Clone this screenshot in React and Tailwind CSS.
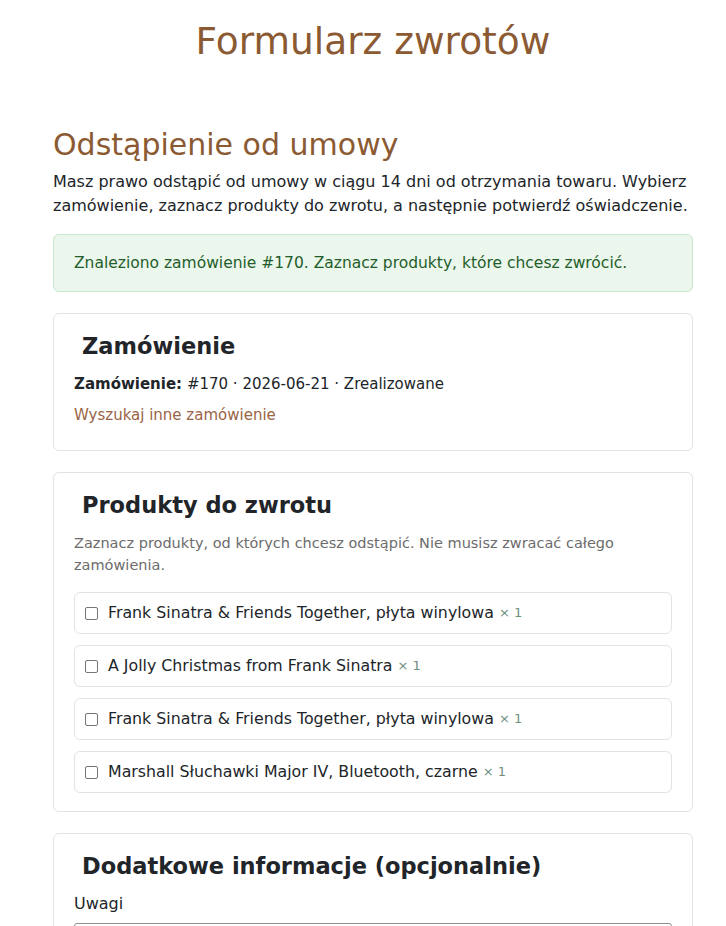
import React from "react";

const items = [
  "Frank Sinatra & Friends Together, płyta winylowa",
  "A Jolly Christmas from Frank Sinatra",
  "Frank Sinatra & Friends Together, płyta winylowa",
  "Marshall Słuchawki Major IV, Bluetooth, czarne",
];

export default function App() {
  return (
    <div className="min-h-[926px] bg-white text-[#212529] font-['DejaVu_Sans',sans-serif] overflow-hidden">
      <div className="ml-[53px] w-[640px]">
        <h1 className="pt-[20px] text-center text-[37.5px] leading-[43px] text-[#8b5a32]">Formularz zwrotów</h1>
        <h2 className="mt-[64px] text-[30px] leading-[36px] text-[#8b5a32]">Odstąpienie od umowy</h2>
        <p className="mt-[7px] text-[16px] leading-[24px]">
          Masz prawo odstąpić od umowy w ciągu 14 dni od otrzymania towaru. Wybierz zamówienie, zaznacz produkty do zwrotu, a następnie potwierdź oświadczenie.
        </p>
        <div className="mt-[16px] rounded-md border border-[#c8e8cc] bg-[#ebf6ec] px-[20px] py-[16px] text-[15.5px] leading-[24px] text-[#1f5e2a]">
          Znaleziono zamówienie #170. Zaznacz produkty, które chcesz zwrócić.
        </div>

        <section className="mt-[21px] rounded-md border border-[#e3e3e3] px-[20px] pt-[16px] pb-[24px]">
          <h3 className="pl-2 text-[22.5px] leading-[32px] font-semibold">Zamówienie</h3>
          <p className="mt-[10px] text-[15px] leading-[24px]">
            <span className="font-bold">Zamówienie:</span> #170 · 2026-06-21 · Zrealizowane
          </p>
          <a href="#" className="mt-[8px] block text-[15px] leading-[22px] text-[#9a6446]">Wyszukaj inne zamówienie</a>
        </section>

        <section className="mt-[21px] rounded-md border border-[#e3e3e3] px-[20px] pt-[16px] pb-[18px]">
          <h3 className="pl-2 text-[22.5px] leading-[32px] font-semibold">Produkty do zwrotu</h3>
          <p className="mt-[11px] text-[14.5px] leading-[22px] text-[#6c6c6c]">
            Zaznacz produkty, od których chcesz odstąpić. Nie musisz zwracać całego zamówienia.
          </p>
          <div className="mt-[16px] flex flex-col gap-[11px]">
            {items.map((t, i) => (
              <label key={i} className="flex h-[42px] items-center rounded-md border border-[#e3e3e3] px-[10px]">
                <span className="mr-[10px] h-[13px] w-[13px] shrink-0 rounded-[2px] border border-[#767676] bg-white" />
                <span className="text-[15.8px] leading-[24px]">{t}</span>
                <span className="ml-[5px] text-[13px] text-[#6f8f7f]">× 1</span>
              </label>
            ))}
          </div>
        </section>

        <section className="mt-[21px] rounded-md border border-[#e3e3e3] px-[20px] pt-[16px] pb-[19px]">
          <h3 className="pl-2 text-[22.5px] leading-[32px] font-semibold">Dodatkowe informacje (opcjonalnie)</h3>
          <label className="mt-[10px] block text-[16px] leading-[24px]">Uwagi</label>
          <div className="mt-[7px] h-[80px] rounded-[3px] border border-[#8f8f8f]" />
        </section>
      </div>
    </div>
  );
}
